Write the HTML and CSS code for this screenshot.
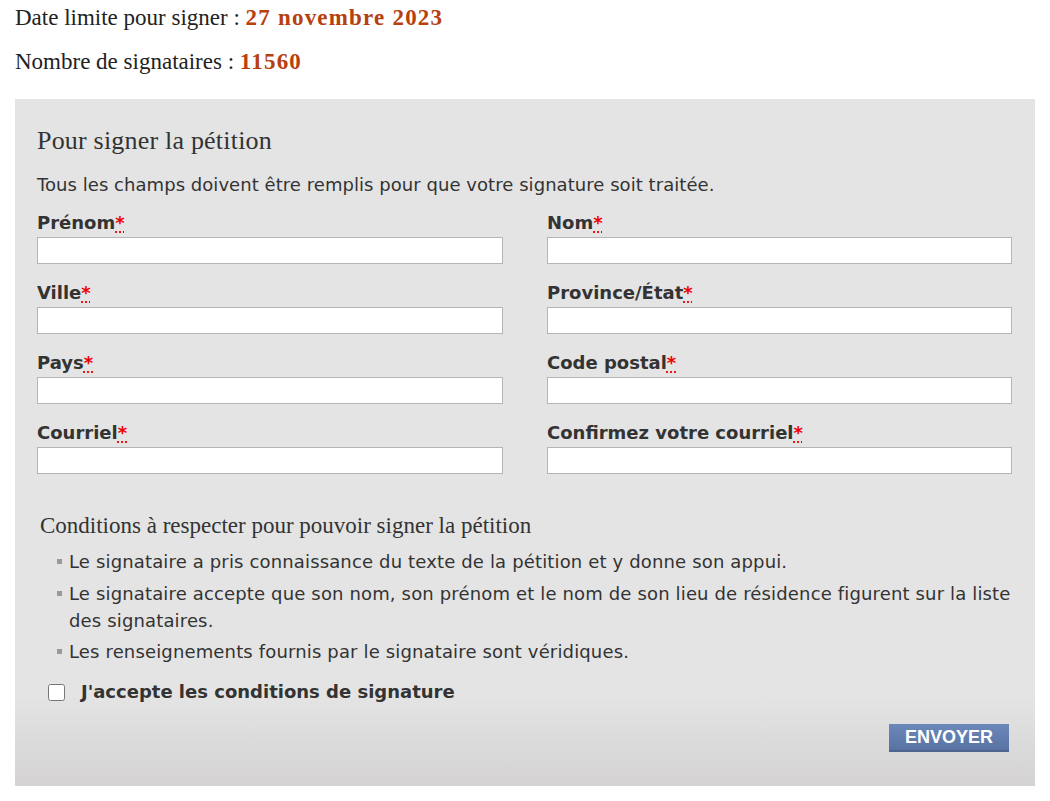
FILE: index.html
```html
<!doctype html>
<html lang='fr-CA'>
<head>
  <title>Signer la pétition</title>
  <meta charset='utf-8'>
  <link rel="stylesheet" href="styles.css">
</head>
<body>
  <main>
    <p class='meta'>Date limite pour signer : <strong>27 novembre 2023</strong></p>
    <p class='meta'>Nombre de signataires : <strong>11560</strong></p>

    <form id='form' class='sign' novalidate>
      <h2>Pour signer la pétition</h2>
      <p class='intro'>Tous les champs doivent être remplis pour que votre signature soit traitée.</p>

      <div class='fields'>
        <div class='field'>
          <label for='prenom'>Prénom<abbr title='obligatoire'>*</abbr></label>
          <input id='prenom' name='prenom' required>
        </div>
        <div class='field'>
          <label for='nom'>Nom<abbr title='obligatoire'>*</abbr></label>
          <input id='nom' name='nom' required>
        </div>
        <div class='field'>
          <label for='ville'>Ville<abbr title='obligatoire'>*</abbr></label>
          <input id='ville' name='ville' required>
        </div>
        <div class='field'>
          <label for='province'>Province/État<abbr title='obligatoire'>*</abbr></label>
          <input id='province' name='province' required>
        </div>
        <div class='field'>
          <label for='pays'>Pays<abbr title='obligatoire'>*</abbr></label>
          <input id='pays' name='pays' required>
        </div>
        <div class='field'>
          <label for='cp'>Code postal<abbr title='obligatoire'>*</abbr></label>
          <input id='cp' name='cp' required>
        </div>
        <div class='field'>
          <label for='courriel'>Courriel<abbr title='obligatoire'>*</abbr></label>
          <input id='courriel' name='courriel' type='email' required>
        </div>
        <div class='field'>
          <label for='courriel2'>Confirmez votre courriel<abbr title='obligatoire'>*</abbr></label>
          <input id='courriel2' name='courriel2' type='email' required>
        </div>
      </div>

      <h3>Conditions à respecter pour pouvoir signer la pétition</h3>
      <ul class='conditions'>
        <li>Le signataire a pris connaissance du texte de la pétition et y donne son appui.</li>
        <li>Le signataire accepte que son nom, son prénom et le nom de son lieu de résidence figurent sur la liste des signataires.</li>
        <li>Les renseignements fournis par le signataire sont véridiques.</li>
      </ul>

      <label class='accept'><input type='checkbox' name='accept' required> J'accepte les conditions de signature</label>

      <div class='actions'>
        <button>ENVOYER</button>
      </div>
    </form>
  </main>
</body>
</html>
```

FILE: styles.css
```css
*, html { box-sizing: border-box; }
body    { margin: 0; background: #fff; color: #333; font: 18px "DejaVu Sans", Verdana, sans-serif; }
main    { padding: 5px 15px 0; }

.meta { font: 23px/26px "Liberation Serif", Georgia, serif; color: #222; margin: 0 0 18px; }
.meta strong { color: #b6410f; letter-spacing: 1.2px; }

.sign {
  background: linear-gradient(to bottom, #e4e4e4 calc(100% - 90px), #d4d2d2 100%);
  padding: 27px 23px 34px 22px;
  margin-top: 24px;
}
h2 { font: 26px/30px "Liberation Serif", Georgia, serif; color: #333; margin: 0 0 17px; letter-spacing: 0.2px; }
.intro { margin: 0 0 15px; line-height: 24px; letter-spacing: 0.05px; }

.fields { display: grid; grid-template-columns: 466px 465px; column-gap: 44px; row-gap: 18px; }
.field label { display: block; font-weight: bold; line-height: 22px; margin-bottom: 3px; }
.field input { display: block; width: 100%; height: 27px; border: 1px solid #b5b5b5; background: #fff; border-radius: 0; }
abbr { color: #e00; text-decoration: underline dotted #e00; text-underline-offset: 3px; }

h3 { font: 23px/26px "Liberation Serif", Georgia, serif; color: #333; margin: 39px 0 9px 3px; }
.conditions { list-style: none; padding: 0 0 0 20px; margin: 0; }
.conditions li { position: relative; padding-left: 12px; line-height: 27px; margin-bottom: 4.5px; letter-spacing: 0.15px; }
.conditions li::before { content: ''; position: absolute; left: 0; top: 11px; width: 5px; height: 5px; background: #999; }

.accept { display: flex; align-items: center; gap: 16px; margin: 15px 0 0 11px; font-weight: bold; line-height: 24px; }
.accept input { width: 17px; height: 17px; margin: 0; }

.actions { display: flex; justify-content: flex-end; margin-top: 20px; padding-right: 3px; }
button {
  background: linear-gradient(to bottom, #6c88b9, #5873a3);
  border: 0; border-bottom: 2px solid #4e6590; color: #fff;
  font: bold 18px "Liberation Sans", Arial, sans-serif;
  width: 120px; height: 28px; padding: 0;
}
```
